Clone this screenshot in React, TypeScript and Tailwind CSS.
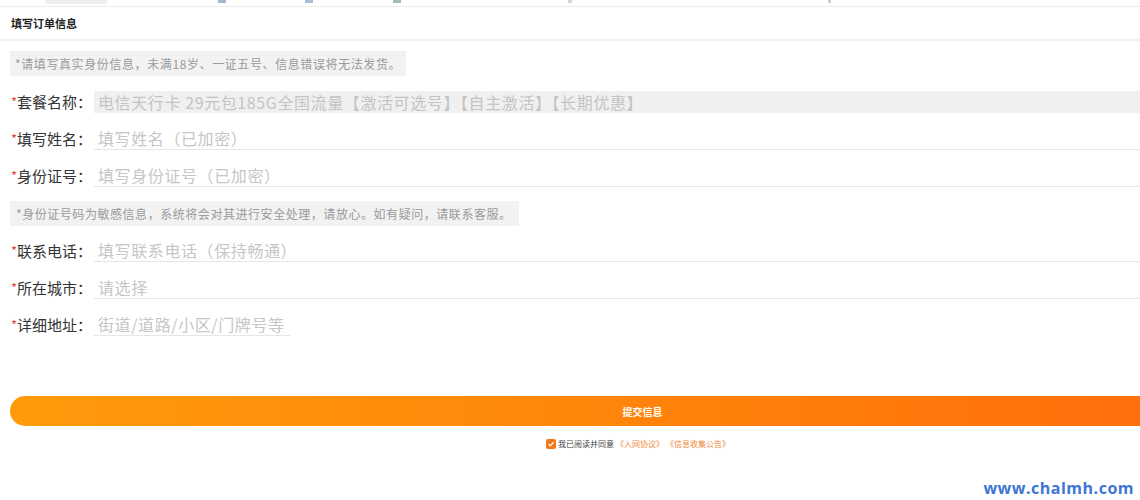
import React from "react";

const font = { fontFamily: '"Microsoft YaHei", "Noto Sans CJK SC", "Noto Sans", sans-serif' };

function Row({ label, placeholder, value, short, filled }: { label: string; placeholder?: string; value?: string; short?: boolean; filled?: boolean }) {
  return (
    <div className="flex h-[37px] items-center">
      <div className="flex w-[94px] shrink-0 items-center whitespace-nowrap pl-[11px] text-[15px] leading-none text-[#333]">
        <span className="text-[13px] text-[#e0453a]">*</span>
        <span>{label}</span>
      </div>
      <div
        className={
          "flex h-[22px] items-center whitespace-nowrap pl-[4px] text-[16px] leading-none tracking-[0.6px] " +
          (filled ? "bg-[#f0f0f0] text-[#c4c4c4] w-[1180px]" : "border-b border-[#e6e6e6] text-[#c6c6c6] ") +
          (short ? "w-[196px]" : filled ? "" : "w-[1180px]")
        }
      >
        {value ?? placeholder}
      </div>
    </div>
  );
}

export default function App() {
  return (
    <div className="relative h-[500px] w-[1140px] overflow-hidden bg-white" style={font}>
      <div className="w-[1275px]">
        {/* top cut-off strip */}
        <div className="relative flex h-[7px] items-start border-b border-[#ececec]">
          <div className="ml-[45px] h-[4px] w-[63px] rounded-b bg-[#eeeeee]" />
          <div className="ml-[110px] h-[3px] w-[8px] bg-[#9fb6d6]" />
          <div className="ml-[79px] h-[3px] w-[8px] bg-[#a8bcd8]" />
          <div className="ml-[80px] h-[3px] w-[8px] bg-[#9cc3b4]" />
          <div className="ml-[167px] h-[3px] w-[4px] bg-[#d6d6d6]" />
          <div className="ml-[256px] h-[3px] w-[3px] bg-[#d0d0d0]" />
        </div>
        {/* header */}
        <div className="flex h-[34px] items-center border-b-2 border-[#f2f2f2] pl-[11px] text-[11px] font-bold text-[#222]">
          填写订单信息
        </div>
        <div className="pt-[10px]">
          <div className="ml-[10px] flex h-[25px] w-[396px] items-center whitespace-nowrap bg-[#f2f2f2] pl-[5px] text-[12px] tracking-[0.6px] text-[#9a9a9a]">
            *请填写真实身份信息，未满18岁、一证五号、信息错误将无法发货。
          </div>
        </div>
        <div className="mt-[7px]">
          <Row label="套餐名称：" value="电信天行卡 29元包185G全国流量【激活可选号】【自主激活】【长期优惠】" filled />
          <Row label="填写姓名：" placeholder="填写姓名（已加密）" />
          <Row label="身份证号：" placeholder="填写身份证号（已加密）" />
        </div>
        <div className="mt-[7px] ml-[10px] flex h-[25px] w-[509px] items-center whitespace-nowrap bg-[#f2f2f2] pl-[6px] text-[12px] tracking-[0.55px] text-[#9a9a9a]">
          *身份证号码为敏感信息，系统将会对其进行安全处理，请放心。如有疑问，请联系客服。
        </div>
        <div className="mt-[6px]">
          <Row label="联系电话：" placeholder="填写联系电话（保持畅通）" />
          <Row label="所在城市：" placeholder="请选择" />
          <Row label="详细地址：" placeholder="街道/道路/小区/门牌号等" short />
        </div>
        <div className="mt-[53px] ml-[10px] flex h-[30px] w-[1265px] items-center justify-center rounded-full bg-gradient-to-r from-[#ff9b0b] to-[#ff690b] text-[10px] font-bold text-white">
          提交信息
        </div>
        <div className="mt-[12px] flex w-[1140px] items-center justify-center pl-[136px] pr-0 text-[8px]">
          <div className="flex items-center">
            <span className="mr-[2px] flex h-[10px] w-[10px] items-center justify-center rounded-[2px] bg-[#f07a1a]">
              <svg width="8" height="8" viewBox="0 0 10 10">
                <path d="M2 5.2 L4.2 7.3 L8 2.8" stroke="white" strokeWidth="1.6" fill="none" />
              </svg>
            </span>
            <span className="text-[#444]">我已阅读并同意</span>
            <span className="ml-[2px] text-[#f08a3a]">《入网协议》</span>
            <span className="ml-[2px] text-[#f08a3a]">《信息收集公告》</span>
          </div>
        </div>
      </div>
      <div
        className="absolute bottom-0 right-[6px] text-[16px] font-bold tracking-[0.5px] text-[#3d76d4]"
        style={{ fontFamily: '"Open Sans", "DejaVu Sans", sans-serif' }}
      >
        www.chalmh.com
      </div>
    </div>
  );
}
